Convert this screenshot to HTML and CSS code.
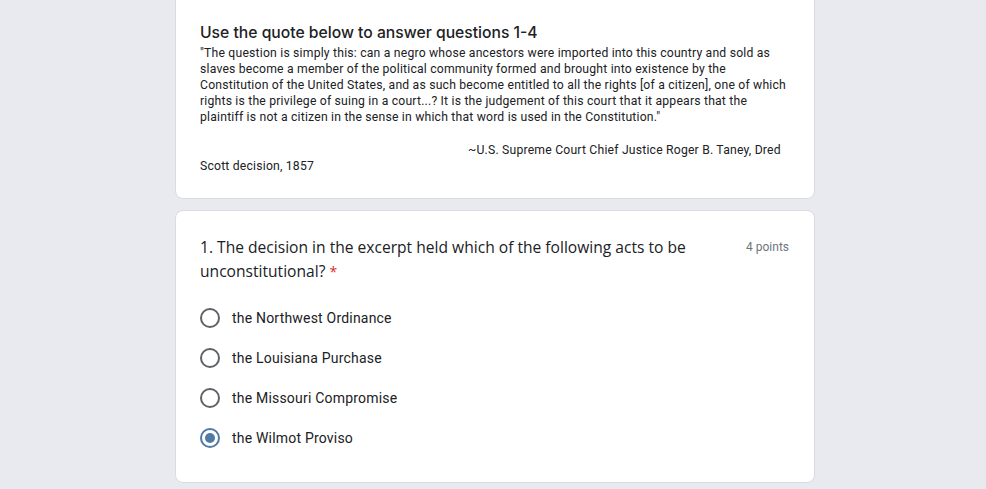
FILE: index.html
```html
<!DOCTYPE html>
<html lang="en">
<head>
<meta charset="utf-8">
<title>Form</title>
<link rel="stylesheet" href="styles.css">
</head>
<body>
<main class="page">
  <section class="card card-top">
    <h2 class="section-title">Use the quote below to answer questions 1-4</h2>
    <div class="quote">
      <p>"The question is simply this: can a negro whose ancestors were imported into this country and sold as<br>slaves become a member of the political community formed and brought into existence by the<br>Constitution of the United States, and as such become entitled to all the rights [of a citizen], one of which<br>rights is the privilege of suing in a court...? It is the judgement of this court that it appears that the<br>plaintiff is not a citizen in the sense in which that word is used in the Constitution."</p>
      <p class="blank">&nbsp;</p>
      <p class="attrib">~U.S. Supreme Court Chief Justice Roger B. Taney, Dred<br>Scott decision, 1857</p>
    </div>
  </section>
  <section class="card question">
    <div class="q-head">
      <div class="q-title">1. The decision in the excerpt held which of the following acts to be<br>unconstitutional? <span class="req">*</span></div>
      <div class="points">4 points</div>
    </div>
    <div class="options">
      <label class="option"><span class="radio"></span><span class="opt-text">the Northwest Ordinance</span></label>
      <label class="option"><span class="radio"></span><span class="opt-text">the Louisiana Purchase</span></label>
      <label class="option"><span class="radio"></span><span class="opt-text">the Missouri Compromise</span></label>
      <label class="option"><span class="radio checked"></span><span class="opt-text">the Wilmot Proviso</span></label>
    </div>
  </section>
</main>
</body>
</html>
```
FILE: styles.css
```css
html, body {
  margin: 0;
  padding: 0;
  background: #e8eaef;
}
body {
  font-family: Roboto, "Liberation Sans", Arial, sans-serif;
  color: #202124;
}
.page {
  width: 640px;
  margin-left: 175px;
  display: flex;
  flex-direction: column;
  gap: 11px;
  margin-top: -10px;
}
.card {
  background: #fff;
  border: 1px solid #dadce0;
  border-radius: 8px;
  padding: 24px;
}
.card-top {
  padding-top: 32px;
  padding-bottom: 24px;
}
.section-title {
  margin: 0 0 2px;
  font-family: Inter, "Open Sans", sans-serif;
  font-weight: 500;
  font-size: 15.7px;
  line-height: 20px;
  color: #202124;
}
.quote {
  font-size: 12.2px;
  letter-spacing: 0.2px;
  line-height: 16px;
  color: #202124;
  white-space: nowrap;
}
.quote p {
  margin: 0;
}
.attrib {
  text-indent: 268px;
  padding-top: 1px;
}
.question {
  padding-top: 24px;
  padding-bottom: 24px;
}
.q-head {
  display: flex;
  justify-content: space-between;
  align-items: flex-start;
}
.q-title {
  font-family: "Open Sans", "Noto Sans", sans-serif;
  font-size: 15.6px;
  line-height: 24px;
  color: #202124;
}
.req {
  color: #d93025;
  font-size: 14px;
}
.points {
  font-size: 12px;
  line-height: 24px;
  color: #70757a;
  margin-right: 1px;
}
.options {
  margin-top: 14px;
  display: flex;
  flex-direction: column;
}
.option {
  display: flex;
  align-items: center;
  height: 40px;
}
.radio {
  box-sizing: border-box;
  width: 20px;
  height: 20px;
  border: 2px solid #5f6368;
  border-radius: 50%;
  margin-right: 12px;
  display: flex;
  align-items: center;
  justify-content: center;
  flex: none;
}
.radio.checked {
  border-color: #5079a6;
}
.radio.checked::after {
  content: "";
  width: 10px;
  height: 10px;
  border-radius: 50%;
  background: #5079a6;
}
.opt-text {
  font-size: 14px;
  letter-spacing: 0.2px;
  line-height: 20px;
  color: #202124;
}
```
